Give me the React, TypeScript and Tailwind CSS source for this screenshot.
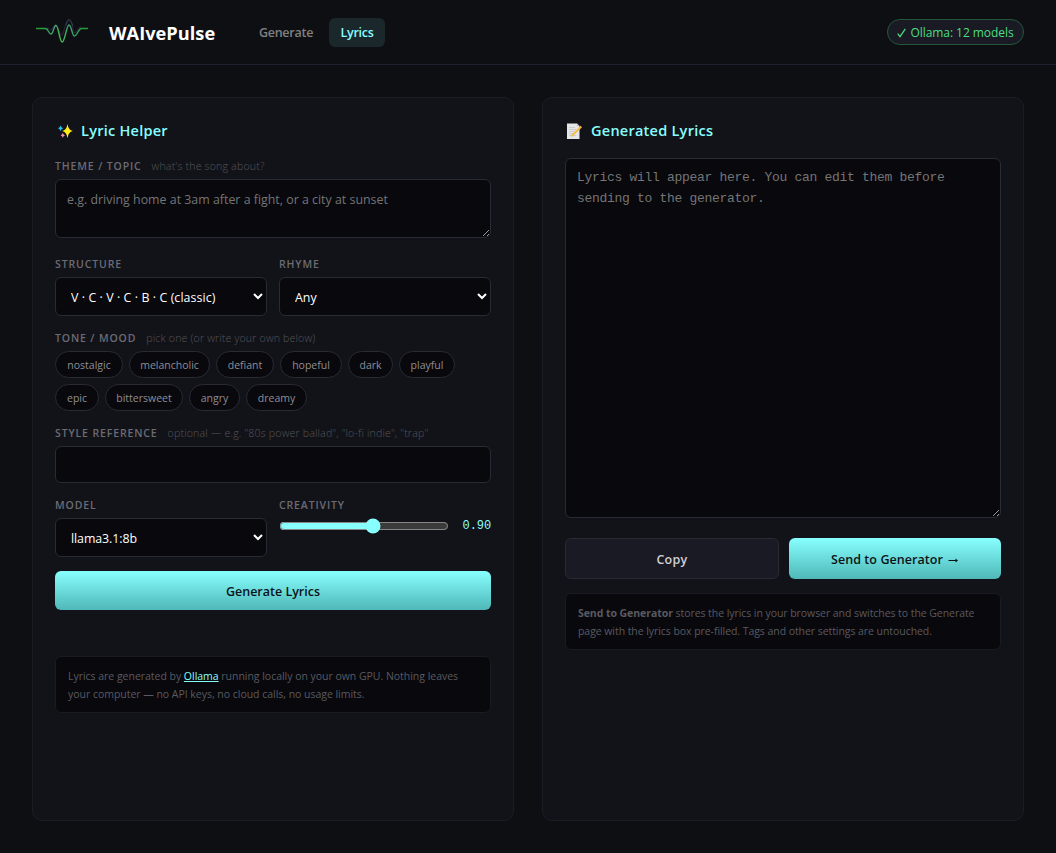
import type { ReactNode } from 'react';

const moods = [
  { name: 'nostalgic', width: 'w-[68px]' },
  { name: 'melancholic', width: 'w-[81px]' },
  { name: 'defiant', width: 'w-[58px]' },
  { name: 'hopeful', width: 'w-[62px]' },
  { name: 'dark', width: 'w-[45px]' },
  { name: 'playful', width: 'w-[56px]' },
  { name: 'epic', width: 'w-[44px]' },
  { name: 'bittersweet', width: 'w-[78px]' },
  { name: 'angry', width: 'w-[51px]' },
  { name: 'dreamy', width: 'w-[61px]' },
];

const field =
  'block w-full rounded-md border border-[#2a2a35] bg-[#08080d] text-white outline-none placeholder:text-[#757575]';

function Wave() {
  return (
    <svg width="54" height="28" viewBox="0 0 54 28" fill="none" className="shrink-0">
      <defs>
        <linearGradient id="wave" x1="0" y1="0" x2="54" y2="0" gradientUnits="userSpaceOnUse">
          <stop offset="0" stopColor="#1c9c1c" />
          <stop offset="0.35" stopColor="#3ba67c" />
          <stop offset="0.5" stopColor="#48b848" />
          <stop offset="0.65" stopColor="#3ca278" />
          <stop offset="1" stopColor="#1c9c1c" />
        </linearGradient>
      </defs>
      <path d="M12 10c3 0 3 4 5 1s3-6 5-3 3 10 5 9 4-16 7-16 4 15 6 14 3-6 6-6" stroke="#48305c" strokeWidth="1" opacity=".65" />
      <path d="M1 10.500h9.500c3 0 3 5.500 5.500 5.500s2.500-8.500 5-8.500 3.500 16.500 6.200 16.500S31.500 7 34 7s3 11 5.500 11 4-7.500 7-7.500h6.500" stroke="url(#wave)" strokeWidth="1.4" />
      <path d="M31 7c1-3 2-4.500 3.500-4.500S37 5 38 8" stroke="#28505c" strokeWidth=".8" />
    </svg>
  );
}

function Sparkles() {
  return (
    <svg width="16" height="16" viewBox="0 0 16 16" className="shrink-0">
      <path d="M9.500 1 Q10.400 7.100 14.800 8 Q10.400 8.900 9.500 15 Q8.600 8.900 4.200 8 Q8.600 7.100 9.500 1Z" fill="#ffec16" />
      <path d="M2.500 2.500 Q3 4.800 5.200 5.300 Q3 5.800 2.500 8.200 Q2 5.800 0 5.300 Q2 4.800 2.500 2.500Z" fill="#28bdf0" />
      <path d="M4.800 9.800 Q5.300 11.800 7 12.300 Q5.300 12.800 4.800 14.800 Q4.300 12.800 2.600 12.300 Q4.300 11.800 4.800 9.800Z" fill="#f092b4" />
    </svg>
  );
}

function Memo() {
  return (
    <svg width="17" height="17" viewBox="0 0 17 17" className="shrink-0">
      <path d="M1 .5h10L13.500 3v13H1z" fill="#e6e6e6" />
      <path d="M11 .5V3h2.500z" fill="#b5b5b5" />
      <path d="M3 4.500h6M3 6.500h7M3 8.500h5M3 10.500h4M3 12.500h7" stroke="#c3c6ca" strokeWidth=".8" />
      <path d="M5.500 11.800 14.500 2.700 16 4.200 7 13.100l-2.200.8z" fill="#f5bd45" />
    </svg>
  );
}

function Label({ children, hint }: { children: ReactNode; hint?: string }) {
  return (
    <div className="flex h-[18px] items-center whitespace-nowrap pt-[2px]">
      <span className="text-[10.5px] font-semibold tracking-[0.87px] text-[#6b6b75]">{children}</span>
      {hint && <span className="ml-[10px] text-[10.6px] font-light tracking-[0.17px] text-[#55555c]">{hint}</span>}
    </div>
  );
}

function Title({ icon, children }: { icon: ReactNode; children: ReactNode }) {
  return (
    <h2 className="flex h-5 items-center gap-[7px] text-[14.5px] font-semibold tracking-[0.25px] text-[#88ffff]">
      {icon}
      {children}
    </h2>
  );
}

function Note({ children, className }: { children: ReactNode; className: string }) {
  return (
    <div
      className={
        'h-[57px] whitespace-nowrap rounded-md border border-[#1a1a22] bg-[#08080d] px-3 pt-[10px] text-[10.5px] leading-[18px] text-[#5a5a60] ' +
        className
      }
    >
      {children}
    </div>
  );
}

export default function App() {
  return (
    <div className="flex h-[853px] w-[1056px] flex-col overflow-hidden bg-[#0e0f13] font-['Open_Sans','Noto_Sans',sans-serif] text-white scheme-dark">
      <header className="flex h-[65px] shrink-0 items-center border-b border-[#1f1f2d] px-8">
        <div className="flex w-[77px] pl-[3px]">
          <Wave />
        </div>
        <div className="w-[138px] pt-[3px] text-[18.2px] font-bold tracking-[0.02px]">WAIvePulse</div>
        <nav className="flex items-center text-[12.5px] font-semibold">
          <a className="flex h-[29px] w-[78px] items-center justify-center pt-[3px] tracking-[-0.25px] text-[#808085]">Generate</a>
          <a className="ml-1 flex h-[29px] w-14 items-center justify-center rounded-md bg-[#1a272b] pt-[3px] tracking-[-0.3px] text-[#88ffff]">Lyrics</a>
        </nav>
        <div className="ml-auto flex h-[26px] w-[137px] items-center justify-center gap-1 whitespace-nowrap rounded-full border border-[#23583c] bg-[#1a1a24] pt-[2px] text-[12px] tracking-[-0.06px] text-[#4ade80]">
          <svg width="9" height="10" viewBox="0 0 9 10" fill="none">
            <path d="m.7 5.700 2.300 3L8.300.8" stroke="currentColor" strokeWidth="1.200" />
          </svg>
          Ollama: 12 models
        </div>
      </header>

      <main className="grid grow grid-cols-2 gap-7 p-8">
        <section className="flex flex-col rounded-[10px] border border-[#1c1c26] bg-[#121318] px-[22px] pt-[23px]">
          <Title icon={<span className="flex w-[19px] pl-[3px]"><Sparkles /></span>}>Lyric Helper</Title>

          <div className="mt-4">
            <Label hint="what's the song about?">THEME / TOPIC</Label>
            <textarea
              className={field + ' mt-[4px] h-[59px] px-[11px] py-[10px] text-[12.4px] leading-[20px]'}
              placeholder="e.g. driving home at 3am after a fight, or a city at sunset"
            />
          </div>

          <div className="mt-[17px] grid grid-cols-2 gap-3">
            <div>
              <Label>STRUCTURE</Label>
              <select className={field + ' mt-1 h-[39px] px-[11px] pt-[2px] text-[12.4px] tracking-[0.08px]'}>
                <option>V · C · V · C · B · C (classic)</option>
              </select>
            </div>
            <div>
              <Label>RHYME</Label>
              <select className={field + ' mt-1 h-[39px] px-[11px] pt-[2px] text-[12.4px]'}>
                <option>Any</option>
              </select>
            </div>
          </div>

          <div className="mt-[13px]">
            <Label hint="pick one (or write your own below)">TONE / MOOD</Label>
            <div className="mt-1 flex flex-wrap gap-[6px]">
              {moods.map((m) => (
                <button
                  key={m.name}
                  className={'h-[27px] rounded-full border border-[#2a2a35] bg-[#08080d] pt-[2px] text-[10.5px] text-[#8e8e94] ' + m.width}
                >
                  {m.name}
                </button>
              ))}
            </div>
          </div>

          <div className="mt-[13px]">
            <Label hint={'optional — e.g. "80s power ballad", "lo-fi indie", "trap"'}>STYLE REFERENCE</Label>
            <input className={field + ' mt-1 h-[37px] px-3 text-[12.4px]'} />
          </div>

          <div className="mt-[13px] grid grid-cols-2 gap-3">
            <div>
              <Label>MODEL</Label>
              <select className={field + ' mt-1 h-[39px] px-[11px] pt-[2px] text-[12.4px] tracking-[-0.08px]'}>
                <option>llama3.1:8b</option>
              </select>
            </div>
            <div>
              <Label>CREATIVITY</Label>
              <div className="mt-1 flex h-4 items-center">
                <input type="range" min="0.2" max="1.45" step="0.05" defaultValue="0.9" className="h-4 w-[170px] accent-[#88ffff]" />
                <span className="ml-auto font-['Liberation_Mono',monospace] text-[12px] tracking-[-0.1px] text-[#88ffff]">0.90</span>
              </div>
            </div>
          </div>

          <button className="mt-[14px] h-[39px] shrink-0 rounded-md bg-linear-to-b from-[#88ffff] to-[#4fb8b8] pt-[3px] text-[12.5px] font-semibold text-[#0c1418]">
            Generate Lyrics
          </button>

          <Note className="mt-[46px] tracking-[-0.025px]">
            Lyrics are generated by <a className="text-[#88ffff] underline">Ollama</a> running locally on your own GPU. Nothing leaves
            <br />
            your computer — no API keys, no cloud calls, no usage limits.
          </Note>
        </section>

        <section className="flex flex-col rounded-[10px] border border-[#1c1c26] bg-[#121318] px-[22px] pt-[23px]">
          <Title icon={<span className="flex w-[19px] pl-[1px]"><Memo /></span>}>Generated Lyrics</Title>
          <textarea
            className={
              field +
              " mt-[17px] h-[360px] shrink-0 px-[11px] py-[8px] font-['Liberation_Mono',monospace] text-[13px] leading-[21px] tracking-[-0.3px]"
            }
            placeholder="Lyrics will appear here. You can edit them before sending to the generator."
          />
          <div className="mt-5 flex h-[41px] shrink-0 gap-[10px] text-[12.5px] font-semibold">
            <button className="w-[214px] rounded-md border border-[#2a2a35] bg-[#1a1a24] pt-[3px] tracking-[0.3px] text-[#d0d0d4]">Copy</button>
            <button className="flex grow items-center justify-center gap-[5px] rounded-md bg-linear-to-b from-[#88ffff] to-[#4fb8b8] pt-[3px] tracking-[0.07px] text-[#0c1418]">
              Send to Generator
              <svg width="11" height="8" viewBox="0 0 11 8" fill="none">
                <path d="M.5 4.500h8.500" stroke="currentColor" strokeWidth="1" />
                <path d="M7.500 2.500 10 4.500 7.500 6.500z" fill="currentColor" />
              </svg>
            </button>
          </div>
          <Note className="mt-[14px] tracking-[-0.06px]">
            <b className="font-bold">Send to Generator</b> stores the lyrics in your browser and switches to the Generate
            <br />
            page with the lyrics box pre-filled. Tags and other settings are untouched.
          </Note>
        </section>
      </main>
    </div>
  );
}
